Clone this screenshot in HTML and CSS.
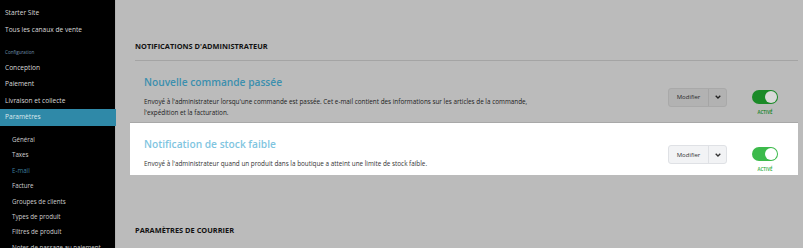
FILE: index.html
```html
<!DOCTYPE html>
<html lang="fr">
<head>
<meta charset="utf-8">
<title>Paramètres E-mail</title>
<link rel="stylesheet" href="styles.css">
</head>
<body>
<div class="app">
  <nav class="sidebar">
    <div class="nav-item">Starter Site</div>
    <div class="nav-item">Tous les canaux de vente</div>
    <div class="nav-label">Configuration</div>
    <div class="nav-item">Conception</div>
    <div class="nav-item">Paiement</div>
    <div class="nav-item">Livraison et collecte</div>
    <div class="nav-item active">Paramètres</div>
    <div class="subnav">
      <div class="sub-item">Général</div>
      <div class="sub-item">Taxes</div>
      <div class="sub-item current">E-mail</div>
      <div class="sub-item">Facture</div>
      <div class="sub-item">Groupes de clients</div>
      <div class="sub-item">Types de produit</div>
      <div class="sub-item">Filtres de produit</div>
      <div class="sub-item">Notes de passage au paiement</div>
    </div>
  </nav>
  <main class="main">
    <h2 class="section-title first">NOTIFICATIONS D'ADMINISTRATEUR</h2>
    <div class="card dim">
      <div class="card-body">
        <div class="card-title">Nouvelle commande passée</div>
        <div class="card-desc">Envoyé à l'administrateur lorsqu'une commande est passée. Cet e-mail contient des informations sur les articles de la commande, l'expédition et la facturation.</div>
      </div>
      <div class="actions">
        <div class="split-btn">
          <span class="btn-main">Modifier</span>
          <span class="btn-caret"><svg width="6" height="4" viewBox="0 0 6 4"><polyline points="0.7,0.7 3,3 5.3,0.7" fill="none" stroke="currentColor" stroke-width="1.3"/></svg></span>
        </div>
        <div class="toggle-group">
          <div class="toggle"><span class="knob"></span></div>
          <div class="toggle-label">ACTIVÉ</div>
        </div>
      </div>
    </div>
    <div class="card lit">
      <div class="card-body">
        <div class="card-title">Notification de stock faible</div>
        <div class="card-desc">Envoyé à l'administrateur quand un produit dans la boutique a atteint une limite de stock faible.</div>
      </div>
      <div class="actions">
        <div class="split-btn">
          <span class="btn-main">Modifier</span>
          <span class="btn-caret"><svg width="6" height="4" viewBox="0 0 6 4"><polyline points="0.7,0.7 3,3 5.3,0.7" fill="none" stroke="currentColor" stroke-width="1.3"/></svg></span>
        </div>
        <div class="toggle-group">
          <div class="toggle"><span class="knob"></span></div>
          <div class="toggle-label">ACTIVÉ</div>
        </div>
      </div>
    </div>
    <h2 class="section-title second">PARAMÈTRES DE COURRIER</h2>
  </main>
</div>
</body>
</html>
```
FILE: styles.css
```css
* { box-sizing: border-box; }
html, body { margin: 0; padding: 0; }
body {
  width: 803px;
  height: 248px;
  overflow: hidden;
  font-family: "Open Sans", "Noto Sans", sans-serif;
  background: #bbbbbb;
}
.app {
  display: flex;
  height: 248px;
}
.sidebar {
  width: 116px;
  flex: none;
  background: #000;
  padding-top: 5px;
  color: #d9d9d9;
  border-right: 1px solid #b2b2b2;
}
.nav-item {
  height: 16.5px;
  line-height: 16.5px;
  padding-left: 5px;
  font-size: 6.6px;
  white-space: nowrap;
}
.nav-item.active {
  background: #2f89a8;
  color: #dde9ee;
  margin-right: -1px;
}
.nav-label {
  margin-top: 9px;
  margin-bottom: 2.5px;
  height: 10px;
  line-height: 10px;
  padding-left: 5px;
  font-size: 4.6px;
  color: #6f92ad;
}
.subnav {
  padding-top: 6.5px;
}
.sub-item {
  height: 15.4px;
  line-height: 15.4px;
  padding-left: 12px;
  font-size: 6.2px;
  color: #cfcfcf;
  white-space: nowrap;
}
.sub-item.current { color: #3d7f9e; }

.main {
  flex: 1;
  padding: 0 5px 0 14px;
  display: flex;
  flex-direction: column;
}
.section-title {
  margin: 0;
  font-size: 7.4px;
  font-weight: 700;
  color: #121212;
  padding-left: 5px;
}
.section-title.first {
  padding-top: 41px;
  height: 61px;
  border-bottom: 1px solid #a4a4a4;
  margin-left: 5px;
  padding-left: 0;
}
.section-title.second {
  margin-top: 50px;
}
.card {
  display: flex;
  padding: 14px 20px 6px 14px;
}
.card.dim {
  border-bottom: 1px solid #a8a8a8;
  height: 62px;
}
.card.lit {
  background: #fff;
  height: 52px;
}
.card-body {
  flex: 1;
}
.card-title {
  font-size: 10.2px;
  line-height: 15px;
  height: 15px;
  font-weight: 600;
}
.dim .card-title { color: #3b8fae; }
.lit .card-title { color: #7fc5df; }
.card-desc {
  margin-top: 5.5px;
  font-size: 6.35px;
  line-height: 11.5px;
  max-width: 400px;
}
.dim .card-desc { color: #1c1c1c; }
.lit .card-desc { color: #333; }

.actions {
  display: flex;
  align-items: flex-start;
  align-self: center;
  margin-top: 11px;
  gap: 25px;
}
.split-btn {
  display: flex;
  height: 19px;
  border-radius: 3px;
  font-size: 6px;
  overflow: hidden;
}
.dim .split-btn { background: #b2b2b2; border: 1px solid #a9a9a9; color: #2a2a2a; }
.lit .split-btn { background: #f2f3f5; border: 1px solid #dfe1e5; color: #333; }
.btn-main {
  width: 39px;
  display: flex;
  align-items: center;
  justify-content: center;
}
.btn-caret {
  width: 18px;
  display: flex;
  align-items: center;
  justify-content: center;
}
.dim .btn-caret { border-left: 1px solid #a5a5a5; color: #222; }
.lit .btn-caret { border-left: 1px solid #dfe1e5; color: #333; }
.toggle-group {
  margin-top: 2px;
  display: flex;
  flex-direction: column;
  align-items: center;
}
.toggle {
  width: 26px;
  height: 14px;
  border-radius: 7px;
  display: flex;
  align-items: center;
  justify-content: flex-end;
  padding-right: 1px;
}
.knob {
  width: 12px;
  height: 12px;
  border-radius: 50%;
}
.dim .toggle { background: #1b8a28; }
.dim .knob { background: #d9d9d9; }
.lit .toggle { background: #3cba4b; }
.lit .knob { background: #fff; }
.toggle-label {
  margin-top: 5px;
  font-size: 4.4px;
  font-weight: 700;
  line-height: 6px;
}
.dim .toggle-label { color: #2b8a38; }
.lit .toggle-label { color: #4db85a; }
```
